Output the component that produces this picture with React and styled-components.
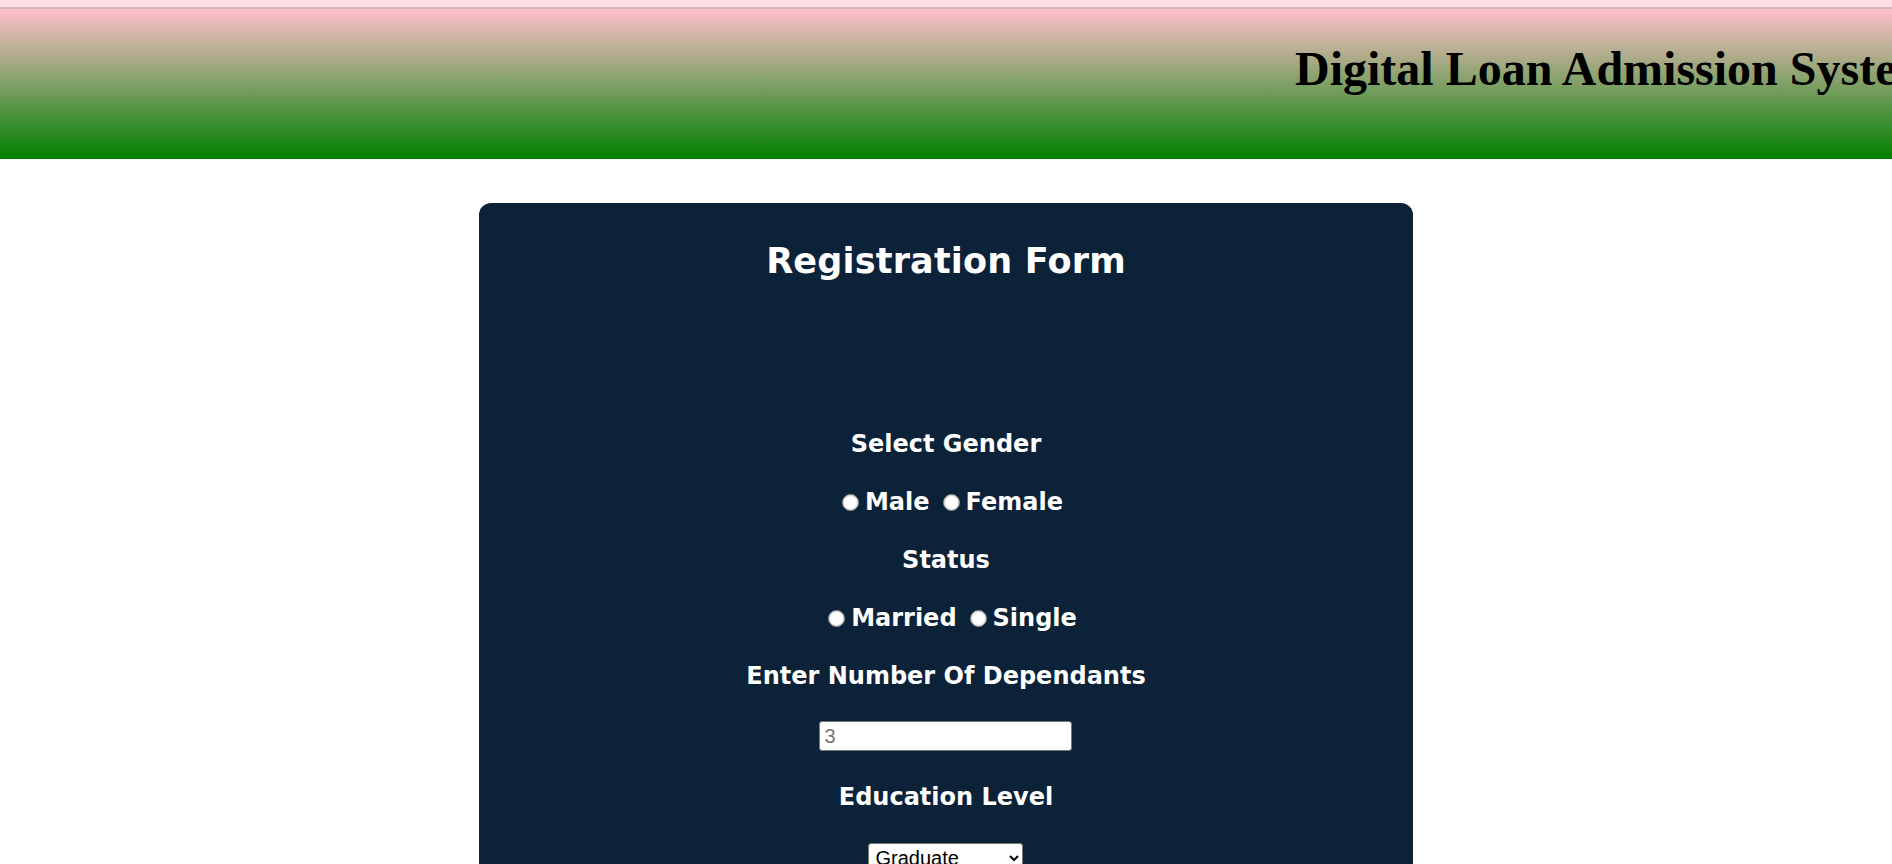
import React from 'react';
import styled, { createGlobalStyle } from 'styled-components';

const GlobalStyle = createGlobalStyle`
    html, body {
        margin: 0;
        padding: 0;
        background: #ffffff;
    }
    body {
        font-family: "DejaVu Sans", Verdana, sans-serif;
        overflow: hidden;
    }
`

const TopStrip = styled.div`
    height: 7px;
    background-color: #ffdfe6;
    border-bottom: 2px solid #d5b6bf;
`

const Header = styled.header`
    height: 150px;
    background: linear-gradient(to bottom, pink, green);
    overflow: hidden;
`

const Marquee = styled.div`
    padding: 32px 0 0 1295px;
    white-space: nowrap;
    overflow: hidden;
`

const SiteTitle = styled.h1`
    display: inline-block;
    margin: 0;
    font-family: "Liberation Serif", "Times New Roman", serif;
    font-size: 48px;
    line-height: 55px;
    font-weight: bold;
    color: #000;
`

const Main = styled.main`
    display: flex;
    justify-content: center;
    padding-top: 44px;
`

const Card = styled.form`
    width: 934px;
    background-color: #0b2239;
    border-radius: 12px;
    padding: 37px 0 60px;
    color: #ffffff;
    display: flex;
    flex-direction: column;
    align-items: center;
`

const FormTitle = styled.h2`
    margin: 0 0 147px;
    font-size: 35px;
    line-height: 42px;
    font-weight: bold;
    letter-spacing: 0.2px;
    text-align: center;
`

const Fields = styled.div`
    display: flex;
    flex-direction: column;
    align-items: center;
    gap: 28px;
`

const Label = styled.div`
    font-size: 24px;
    line-height: 30px;
    font-weight: bold;
    text-align: center;
`

const RadioRow = styled.div`
    display: flex;
    justify-content: center;
    align-items: center;
    height: 30px;
`

const Option = styled.label`
    display: flex;
    align-items: center;
    font-size: 24px;
    line-height: 30px;
    font-weight: bold;
    cursor: pointer;
`

const Radio = styled.input.attrs({ type: 'radio' })`
    appearance: none;
    box-sizing: border-box;
    width: 17px;
    height: 17px;
    margin: 0 6px 0 13px;
    border: 1px solid #8a8a8a;
    border-radius: 50%;
    background: #ffffff;
    box-shadow: inset 0 0 0 1px #d9d9d9;

    &:checked {
        background: radial-gradient(circle, #0075ff 0 4px, #ffffff 5px);
        border-color: #0075ff;
    }
`

const TextInput = styled.input`
    box-sizing: border-box;
    width: 253px;
    height: 30px;
    margin: 2px 0 3px;
    padding: 0 4px;
    border: 1px solid #767676;
    border-radius: 3px;
    font-family: "Liberation Sans", Arial, sans-serif;
    font-size: 20px;
    color: #000;
    background: #fff;

    &::placeholder {
        color: #757575;
    }
`

const Select = styled.select`
    box-sizing: border-box;
    width: 155px;
    height: 30px;
    margin-top: 3px;
    padding: 0 2px;
    border: 1px solid #767676;
    border-radius: 3px;
    font-family: "Liberation Sans", Arial, sans-serif;
    font-size: 20px;
    color: #000;
    background: #fff;
`

const RadioGroup = ({ name, options }) => (
    <RadioRow>
        {options.map(option => (
            <Option key={option}>
                <Radio name={name} value={option} />
                {option}
            </Option>
        ))}
    </RadioRow>
)

export default function App() {
    return (
        <>
            <GlobalStyle />
            <TopStrip />
            <Header>
                <Marquee>
                    <SiteTitle>Digital Loan Admission System</SiteTitle>
                </Marquee>
            </Header>
            <Main>
                <Card onSubmit={e => e.preventDefault()}>
                    <FormTitle>Registration Form</FormTitle>
                    <Fields>
                        <Label>Select Gender</Label>
                        <RadioGroup name='gender' options={['Male', 'Female']} />
                        <Label>Status</Label>
                        <RadioGroup name='status' options={['Married', 'Single']} />
                        <Label>Enter Number Of Dependants</Label>
                        <TextInput type='number' placeholder='3' />
                        <Label>Education Level</Label>
                        <Select defaultValue='Graduate'>
                            <option>Graduate</option>
                            <option>Not Graduate</option>
                        </Select>
                    </Fields>
                </Card>
            </Main>
        </>
    )
}
